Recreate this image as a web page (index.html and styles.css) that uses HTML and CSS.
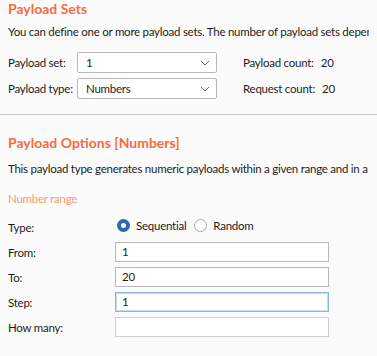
FILE: index.html
```
<!DOCTYPE html>
<html lang="en">
<head>
    <meta charset="UTF-8">
    <meta name="viewport" content="width=device-width, initial-scale=1.0">
    <title>Payloads</title>
    <link rel="stylesheet" href="styles.css">
</head>
<body>
    <div class="section">
        <h2 class="title">Payload Sets</h2>
        <p class="desc">You can define one or more payload sets. The number of payload sets depends on the attack type defined in the Positions tab.</p>
        <div class="set-grid">
            <span class="label">Payload set:</span>
            <div class="select"><span>1</span><svg width="10" height="6" viewBox="0 0 10 6"><path d="M1 1l4 4 4-4" fill="none" stroke="#666" stroke-width="1"/></svg></div>
            <span class="count">Payload count:<b>20</b></span>
            <span class="label">Payload type:</span>
            <div class="select"><span>Numbers</span><svg width="10" height="6" viewBox="0 0 10 6"><path d="M1 1l4 4 4-4" fill="none" stroke="#666" stroke-width="1"/></svg></div>
            <span class="count">Request count:<b>20</b></span>
        </div>
    </div>
    <div class="line"></div>
    <div class="section">
        <h2 class="title second">Payload Options [Numbers]</h2>
        <p class="desc second">This payload type generates numeric payloads within a given range and in a specified format.</p>
        <h3 class="sub">Number range</h3>
        <div class="range-grid">
            <span class="label">Type:</span>
            <div class="radios">
                <span class="radio on"></span><span>Sequential</span>
                <span class="radio"></span><span>Random</span>
            </div>
            <span class="label">From:</span>
            <div class="input">1</div>
            <span class="label">To:</span>
            <div class="input">20</div>
            <span class="label">Step:</span>
            <div class="input focus">1</div>
            <span class="label">How many:</span>
            <div class="input empty"></div>
        </div>
    </div>
</body>
</html>
```
FILE: styles.css
```
body {
    margin: 0;
    background-color: #fbfbfb;
    font-family: Lato, "Noto Sans", sans-serif;
    font-size: 11.5px;
    letter-spacing: -0.25px;
    color: #1c1c1c;
    overflow: hidden;
}
.section {
    padding: 0 8px;
    white-space: nowrap;
}
.title {
    margin: 0;
    padding-top: 1px;
    font-size: 14px;
    letter-spacing: 0;
    font-weight: bold;
    color: #f86b3c;
    line-height: 16px;
}
.title.second {
    padding-top: 20px;
}
.desc {
    margin: 7px 0 0;
    line-height: 16px;
    overflow: hidden;
}
.desc.second {
    margin-top: 10px;
}
.set-grid {
    display: grid;
    grid-template-columns: 69px 140px auto;
    row-gap: 5px;
    align-items: center;
    margin-top: 12px;
}
.select {
    height: 19px;
    border: 1px solid #b8b8b8;
    border-radius: 2px;
    background-color: #fff;
    display: flex;
    align-items: center;
    justify-content: space-between;
    padding: 0 6px 0 8px;
}
.count {
    padding-left: 26px;
}
.count b {
    font-weight: normal;
    margin-left: 7px;
}
.line {
    height: 1px;
    background-color: #c8c8c8;
    margin-top: 15px;
}
.sub {
    margin: 14px 0 0;
    font-size: 11.5px;
    font-weight: normal;
    color: #f99a70;
    line-height: 16px;
}
.range-grid {
    display: grid;
    grid-template-columns: 107px 214px;
    row-gap: 5px;
    align-items: center;
    margin-top: 10px;
}
.radios {
    display: flex;
    align-items: center;
    gap: 6px;
    height: 16px;
    padding-left: 2px;
    margin-bottom: 4px;
}
.radio {
    width: 13px;
    height: 13px;
    box-sizing: border-box;
    border: 1px solid #a8a8a8;
    border-radius: 50%;
    background-color: #fff;
}
.radio.on {
    border: 4px solid #2b6aa6;
}
.radios span + .radio {
    margin-left: 2px;
}
.input {
    height: 18px;
    border: 1px solid #b8b8b8;
    background-color: #fff;
    padding-left: 6px;
    line-height: 18px;
}
.input.focus {
    border: 1px solid #8ab2e2;
    box-shadow: inset 0 0 0 1px #c8dcf3;
}
.input.empty {
    border-color: #cfcfcf;
}
```
